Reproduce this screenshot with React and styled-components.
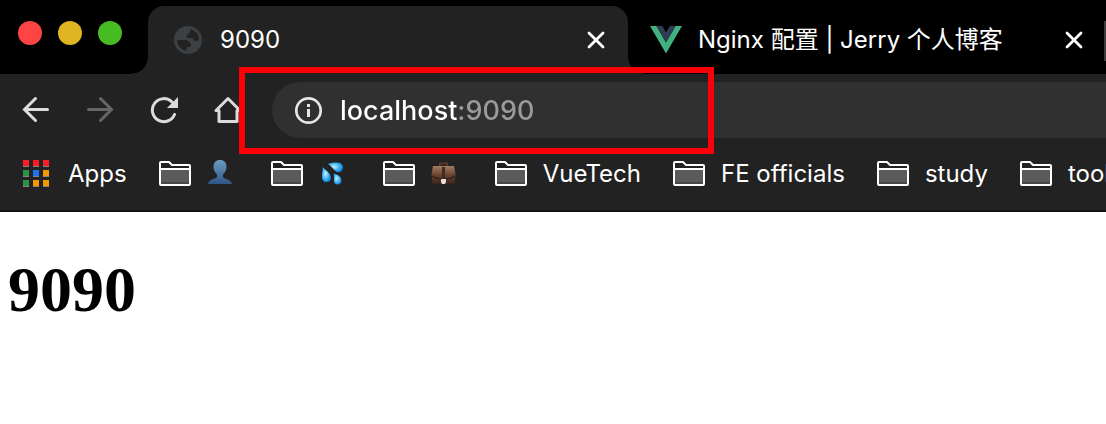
import React from "react";
import styled, { createGlobalStyle } from "styled-components";

const GlobalStyle = createGlobalStyle`
  *, *::before, *::after { box-sizing: border-box; }
  body {
    margin: 0;
    background: #ffffff;
    font-family: Inter, "Noto Sans CJK SC", sans-serif;
    overflow-x: hidden;
  }
  svg { display: block; flex: none; }
`;

const Chrome = styled.header`
  background: #222222;
  border-bottom: 2px solid #111012;
`;

const TitleBar = styled.div`
  display: flex;
  height: 74px;
  padding-top: 6px;
  background: #000000;
  overflow: hidden;
`;

const WindowControls = styled.div`
  display: flex;
  flex: none;
  gap: 16px;
  padding: 15px 26px 0 18px;
`;

const WindowButton = styled.button`
  width: 24px;
  height: 24px;
  padding: 0;
  border: 0;
  border-radius: 50%;
  background: ${(p) => p.$color};
`;

const Tabs = styled.div`
  display: flex;
  min-width: 0;
`;

const Tab = styled.div`
  position: relative;
  z-index: ${(p) => (p.$active ? 1 : 0)};
  display: flex;
  flex: 0 0 480px;
  align-items: center;
  gap: 16px;
  padding: 0 20px 0 24px;
  border-radius: 16px 16px 0 0;
  background: ${(p) => (p.$active ? "#222222" : "transparent")};

  & + & { margin-left: -2px; }

  &::before, &::after {
    content: ${(p) => (p.$active ? '""' : "none")};
    position: absolute;
    bottom: 0;
    width: 16px;
    height: 16px;
  }
  &::before {
    right: 100%;
    background: radial-gradient(circle at 0 0, transparent 15px, #222222 16px);
  }
  &::after {
    left: 100%;
    background: radial-gradient(circle at 100% 0, transparent 15px, #222222 16px);
  }
`;

const TabSeparator = styled.span`
  position: absolute;
  right: 0;
  top: 15px;
  width: 2px;
  height: 40px;
  background: #3c3c3c;
`;

const TabTitle = styled.span`
  flex: 1;
  min-width: 0;
  overflow: hidden;
  white-space: nowrap;
  color: #ffffff;
  font-size: 24px;
  line-height: 32px;
`;

const IconButton = styled.button`
  display: flex;
  flex: none;
  align-items: center;
  justify-content: center;
  width: ${(p) => p.$size}px;
  height: ${(p) => p.$size}px;
  padding: 0;
  border: 0;
  background: none;
  color: ${(p) => (p.disabled ? "#666666" : p.$color || "#dcdcdc")};
`;

const Toolbar = styled.div`
  position: relative;
  z-index: 2;
  display: flex;
  align-items: center;
  gap: 24px;
  padding: 8px 0 8px 16px;
`;

const AddressBar = styled.label`
  display: flex;
  flex: 1;
  align-items: center;
  gap: 16px;
  height: 56px;
  padding-left: 20px;
  border-radius: 28px 0 0 28px;
  background: #303030;
  color: #e6e6e6;
`;

const AddressInput = styled.input`
  flex: 1;
  min-width: 0;
  height: 40px;
  padding: 0;
  border: 0;
  outline: 0;
  background: linear-gradient(90deg, #ffffff 118px, #9b9b9b 118px);
  -webkit-background-clip: text;
  background-clip: text;
  color: transparent;
  caret-color: #ffffff;
  font-family: inherit;
  font-size: 27px;
  font-weight: 500;
`;

const Highlight = styled.div`
  position: absolute;
  left: 239px;
  top: -7px;
  width: 475px;
  height: 87px;
  border: 6px solid #fb0007;
  pointer-events: none;
`;

const Bookmarks = styled.nav`
  display: flex;
  gap: 32px;
  padding: 0 0 8px 20px;
  overflow: hidden;
`;

const Bookmark = styled.a`
  display: flex;
  flex: none;
  align-items: center;
  gap: 16px;
  height: 56px;
  color: #ffffff;
  font-size: 24px;
  line-height: 32px;
  text-decoration: none;
  white-space: nowrap;
`;

const Page = styled.main`
  padding: 40px 8px;
`;

const Heading = styled.h1`
  margin: 0;
  color: #000000;
  font-family: "Liberation Serif", serif;
  font-size: 64px;
  font-weight: 700;
  line-height: 76px;
`;

const GlobeIcon = () => (
  <svg width="32" height="32" viewBox="0 0 32 32" aria-hidden="true">
    <circle cx="16" cy="16" r="14" fill="#3c4043" />
    <path
      d="M18 5.200C23 6 27 10.500 27 15.500c-1 1.800-2.500 1.800-4 1.300-1.800-.6-1.500-2.300-3-2.800h-4.500c-1.500-.5-1.500-3 .5-4 1.500-.5 2.500-1.500 2-4.800z"
      fill="#222222"
    />
    <path
      d="M5 16h8.500c3 0 3.500 2.500 5 3.200 1.500 1 .5 3.800-1.500 3.800h-2l-1 3.800C9 26 5 21.500 5 16z"
      fill="#222222"
    />
  </svg>
);

const VueIcon = () => (
  <svg width="32" height="32" viewBox="0 0 32 32" aria-hidden="true">
    <path d="M0 2h6.500L16 18.500 25.500 2H32L16 29.500z" fill="#3fb27f" />
    <path d="M6.500 2h5.700L16 8.500 19.800 2h5.700L16 18.500z" fill="#2f3e52" />
  </svg>
);

const CloseIcon = () => (
  <svg width="18" height="18" viewBox="0 0 18 18" aria-hidden="true">
    <path d="M2 2l14 14M16 2L2 16" stroke="currentColor" strokeWidth="2.800" strokeLinecap="round" />
  </svg>
);

const ArrowIcon = ({ forward }) => (
  <svg width="28" height="28" viewBox="0 0 28 28" fill="none" aria-hidden="true">
    <path
      d={forward ? "M2.500 13.500h23M14.500 2.500l11 11-11 11" : "M25.500 13.500H3M13.500 2.500l-11 11 11 11"}
      stroke="currentColor"
      strokeWidth="3"
      strokeLinecap="round"
    />
  </svg>
);

const ReloadIcon = () => (
  <svg width="28" height="28" viewBox="0 0 28 28" fill="none" aria-hidden="true">
    <path d="M24.500 18.500A11.500 11.500 0 1 1 22 6" stroke="currentColor" strokeWidth="3" strokeLinecap="round" />
    <path d="M28 1v11H17z" fill="currentColor" />
  </svg>
);

const HomeIcon = () => (
  <svg width="28" height="28" viewBox="0 0 28 28" fill="none" aria-hidden="true">
    <path
      d="M2 14.500L14 2.500l12 12h-3V25.500H5V14.500z"
      stroke="currentColor"
      strokeWidth="3"
      strokeLinejoin="round"
    />
  </svg>
);

const InfoIcon = () => (
  <svg width="32" height="32" viewBox="0 0 32 32" fill="none" aria-hidden="true">
    <circle cx="16.500" cy="16.500" r="12.200" stroke="currentColor" strokeWidth="2.700" />
    <path d="M15 10h3v3h-3zM15 15h3v8h-3z" fill="currentColor" />
  </svg>
);

const APP_COLORS = [
  "#fb1c24", "#fb1c24", "#fb1c24",
  "#2a9346", "#1a73f0", "#f29900",
  "#2a9346", "#f29900", "#f29900",
];

const AppsIcon = () => (
  <svg width="32" height="32" viewBox="0 0 32 32" aria-hidden="true">
    {APP_COLORS.map((color, i) => {
      const x = 3 + (i % 3) * 10;
      const y = 2 + Math.floor(i / 3) * 10;
      return (
        <g key={i}>
          <rect x={x} y={y} width="6" height="7" fill="#858585" />
          <rect x={x} y={y} width="6" height="6" fill={color} />
        </g>
      );
    })}
  </svg>
);

const FolderIcon = () => (
  <svg width="32" height="32" viewBox="0 0 32 32" aria-hidden="true">
    <path
      d="M1 5a1 1 0 0 1 1-1h8l3 3h17a1 1 0 0 1 1 1v18a1 1 0 0 1-1 1H2a1 1 0 0 1-1-1z"
      fill="#222222"
      stroke="#ffffff"
      strokeWidth="2"
    />
    <path d="M2 12h28v14H2z" fill="#5a5a5a" />
    <path d="M2 24h28v2H2z" fill="#464646" />
    <path d="M1 11h30" stroke="#ffffff" strokeWidth="2" />
  </svg>
);

const PersonIcon = () => (
  <svg width="32" height="32" viewBox="0 0 32 32" role="img" aria-label="People">
    <defs>
      <linearGradient id="person" x1="0" y1="0" x2="0" y2="1">
        <stop offset="0" stopColor="#6c9cc2" />
        <stop offset="1" stopColor="#2f5585" />
      </linearGradient>
    </defs>
    <path
      d="M13 2c4 0 6.500 2.500 6.500 7 0 3-1.500 6-3.500 7.500V19c1 2 8 2 9 7H1c1-5 8-5 9-7v-2.500C8 15 6.500 12 6.500 9c0-4.500 2.500-7 6.500-7z"
      fill="url(#person)"
    />
  </svg>
);

const DropletsIcon = () => (
  <svg width="32" height="32" viewBox="0 0 32 32" role="img" aria-label="Droplets">
    <defs>
      <radialGradient id="drop" cx="0.4" cy="0.45" r="0.6">
        <stop offset="0" stopColor="#c5f0ff" />
        <stop offset="0.45" stopColor="#5fc4f7" />
        <stop offset="1" stopColor="#0a84de" />
      </radialGradient>
    </defs>
    <path d="M9 6c4-2 10-2 13-.5 3 2 2.500 7-1 8.500-5 1.500-7-5-12-8z" fill="url(#drop)" />
    <path d="M3.500 9C7 12 12 16 12 19.500c0 3-2 4.500-4.500 4.500S3 22 3 19c0-4 1-6 .5-10z" fill="url(#drop)" />
    <path d="M14.500 15.500c4 1 8 3 8 7 0 2.500-1.500 4-4 4s-3.500-2-3.500-4c0-3 .5-4-.5-7z" fill="url(#drop)" />
  </svg>
);

const BriefcaseIcon = () => (
  <svg width="32" height="32" viewBox="0 0 32 32" role="img" aria-label="Work">
    <defs>
      <linearGradient id="leather" x1="0" y1="0" x2="0" y2="1">
        <stop offset="0" stopColor="#a37b62" />
        <stop offset="0.5" stopColor="#694431" />
        <stop offset="1" stopColor="#3b231a" />
      </linearGradient>
    </defs>
    <path d="M9 8V5.500h7V8" fill="none" stroke="#57372a" strokeWidth="2" />
    <path d="M2 8h21l1.500 8-1 10h-22l-1-10z" fill="url(#leather)" />
    <path d="M1.500 18c4 4 18 4 22 0" fill="none" stroke="#352019" strokeWidth="1.500" />
    <path d="M11 9h3v11h-3z" fill="#442a20" />
    <path d="M10 21h5v3l-1 2h-3l-1-2z" fill="#e1dddd" />
  </svg>
);

const FOLDERS = [
  <PersonIcon />,
  <DropletsIcon />,
  <BriefcaseIcon />,
  "VueTech",
  "FE officials",
  "study",
  "tools",
];

export default function App() {
  return (
    <>
      <GlobalStyle />
      <Chrome>
        <TitleBar>
          <WindowControls>
            <WindowButton $color="#ff4444" aria-label="Close window" />
            <WindowButton $color="#e0b422" aria-label="Minimize window" />
            <WindowButton $color="#47bb22" aria-label="Zoom window" />
          </WindowControls>
          <Tabs>
            <Tab $active>
              <GlobeIcon />
              <TabTitle>9090</TabTitle>
              <IconButton $size={24} $color="#ffffff" aria-label="Close tab"><CloseIcon /></IconButton>
            </Tab>
            <Tab>
              <VueIcon />
              <TabTitle>Nginx 配置 | Jerry 个人博客</TabTitle>
              <IconButton $size={24} $color="#ffffff" aria-label="Close tab"><CloseIcon /></IconButton>
              <TabSeparator />
            </Tab>
          </Tabs>
        </TitleBar>
        <Toolbar>
          <IconButton $size={40} aria-label="Back"><ArrowIcon /></IconButton>
          <IconButton $size={40} aria-label="Forward" disabled><ArrowIcon forward /></IconButton>
          <IconButton $size={40} aria-label="Reload"><ReloadIcon /></IconButton>
          <IconButton $size={40} aria-label="Home"><HomeIcon /></IconButton>
          <AddressBar>
            <InfoIcon />
            <AddressInput type="text" aria-label="Address" defaultValue="localhost:9090" spellCheck={false} />
          </AddressBar>
          <Highlight />
        </Toolbar>
        <Bookmarks aria-label="Bookmarks">
          <Bookmark href="#apps"><AppsIcon />Apps</Bookmark>
          {FOLDERS.map((label, i) => (
            <Bookmark key={i} href={`#folder-${i + 1}`}><FolderIcon />{label}</Bookmark>
          ))}
        </Bookmarks>
      </Chrome>
      <Page>
        <Heading>9090</Heading>
      </Page>
    </>
  );
}
